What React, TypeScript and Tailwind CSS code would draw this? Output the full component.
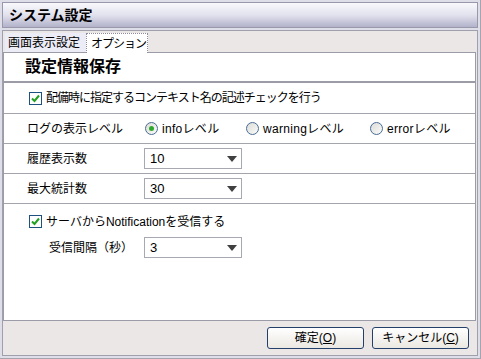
import React from "react";

const font = { fontFamily: '"Liberation Sans", "Noto Sans CJK JP", sans-serif' };

function CheckBox() {
  return (
    <span className="w-[13px] h-[13px] shrink-0 border border-[#1c5180] bg-white flex items-center justify-center">
      <svg width="9" height="9" viewBox="0 0 9 9">
        <path d="M1 4.5 L3.5 7 L8 1.5" fill="none" stroke="#21a121" strokeWidth="2" />
      </svg>
    </span>
  );
}

function Radio({ checked }: { checked?: boolean }) {
  return (
    <span className="w-[13px] h-[13px] shrink-0 rounded-full border border-[#4a6c94] bg-gradient-to-br from-[#dcdcd8] to-[#fbfbfa] flex items-center justify-center">
      {checked && <span className="w-[5px] h-[5px] rounded-full bg-[#2fa82f]" />}
    </span>
  );
}

function Select({ value }: { value: string }) {
  return (
    <div className="w-[98px] h-[21px] border border-[#a8a8b0] bg-white flex items-center justify-between pl-[5px] pr-[4px] text-[13px] text-black">
      <span>{value}</span>
      <svg width="10" height="6" viewBox="0 0 10 6">
        <path d="M0 0 H10 L5 6 Z" fill="#404040" />
      </svg>
    </div>
  );
}

function Button({ label, mnemonic }: { label: string; mnemonic: string }) {
  return (
    <button className="w-[97px] h-[22px] rounded-[3px] border border-[#23406a] bg-gradient-to-b from-white to-[#ebe8e2] text-[12px] text-black flex items-center justify-center">
      {label}(<span className="underline">{mnemonic}</span>)
    </button>
  );
}

export default function App() {
  return (
    <div
      className="w-[481px] h-[359px] bg-[#dedee9] border-r border-b border-[#a4a4b0] p-[2px] flex flex-col text-black"
      style={font}
    >
      {/* title bar */}
      <div className="h-[26px] shrink-0 border border-[#9898aa] bg-gradient-to-b from-[#f8f8fc] via-[#e2e2ee] to-[#b2b2ca] flex items-center pl-[6px] text-[14px] font-bold">
        システム設定
      </div>

      <div className="mt-[2px] flex-1 border border-[#a0a0ac] bg-[#ebe7e7] flex flex-col">
        {/* tabs */}
        <div className="h-[21px] shrink-0 flex items-end pl-[2px] text-[12px]">
          <div className="h-[19px] w-[81px] px-[3px] bg-[#ececf6] flex items-center">画面表示設定</div>
          <div className="h-[20px] w-[62px] pl-[4px] bg-white border border-dotted border-[#8c8c9c] border-b-0 mb-[-1px] relative z-10 flex items-center tracking-[-1px]">
            オプション
          </div>
        </div>

        {/* content */}
        <div className="flex-1 bg-white border border-[#9c9ca8] mr-[1px] flex flex-col text-[12px]">
          <div className="h-[28px] shrink-0 flex items-center pl-[21px] text-[16px] font-bold">設定情報保存</div>
          <div className="h-[2px] shrink-0 bg-[#9c9ca6]" />

          <div className="h-[31px] shrink-0 border-b border-[#a4a4ac] flex items-center gap-[4px] pl-[25px]">
            <CheckBox />
            <span className="tracking-[-1px]">配備時に指定するコンテキスト名の記述チェックを行う</span>
          </div>

          <div className="h-[30px] shrink-0 border-b border-[#a4a4ac] flex items-center pl-[23px]">
            <span className="w-[118px]">ログの表示レベル</span>
            <div className="flex items-center gap-[4px] w-[101px]">
              <Radio checked />
              <span className="tracking-[0.3px]">infoレベル</span>
            </div>
            <div className="flex items-center gap-[4px] w-[124px]">
              <Radio />
              <span className="tracking-[0.3px]">warningレベル</span>
            </div>
            <div className="flex items-center gap-[4px]">
              <Radio />
              <span className="tracking-[0.3px]">errorレベル</span>
            </div>
          </div>

          <div className="h-[30px] shrink-0 border-b border-[#a4a4ac] flex items-center pl-[23px]">
            <span className="w-[117px]">履歴表示数</span>
            <Select value="10" />
          </div>

          <div className="h-[30px] shrink-0 border-b border-[#a4a4ac] flex items-center pl-[23px]">
            <span className="w-[117px]">最大統計数</span>
            <Select value="30" />
          </div>

          <div className="pt-[10px] flex flex-col">
            <div className="h-[15px] flex items-center gap-[4px] pl-[25px]">
              <CheckBox />
              <span>サーバからNotificationを受信する</span>
            </div>
            <div className="mt-[8px] flex items-center pl-[45px]">
              <span className="w-[95px]">受信間隔（秒）</span>
              <Select value="3" />
            </div>
          </div>
        </div>

        {/* buttons */}
        <div className="h-[34px] shrink-0 flex items-center justify-end gap-[8px] pr-[8px]">
          <Button label="確定" mnemonic="O" />
          <Button label="キャンセル" mnemonic="C" />
        </div>
      </div>
    </div>
  );
}
